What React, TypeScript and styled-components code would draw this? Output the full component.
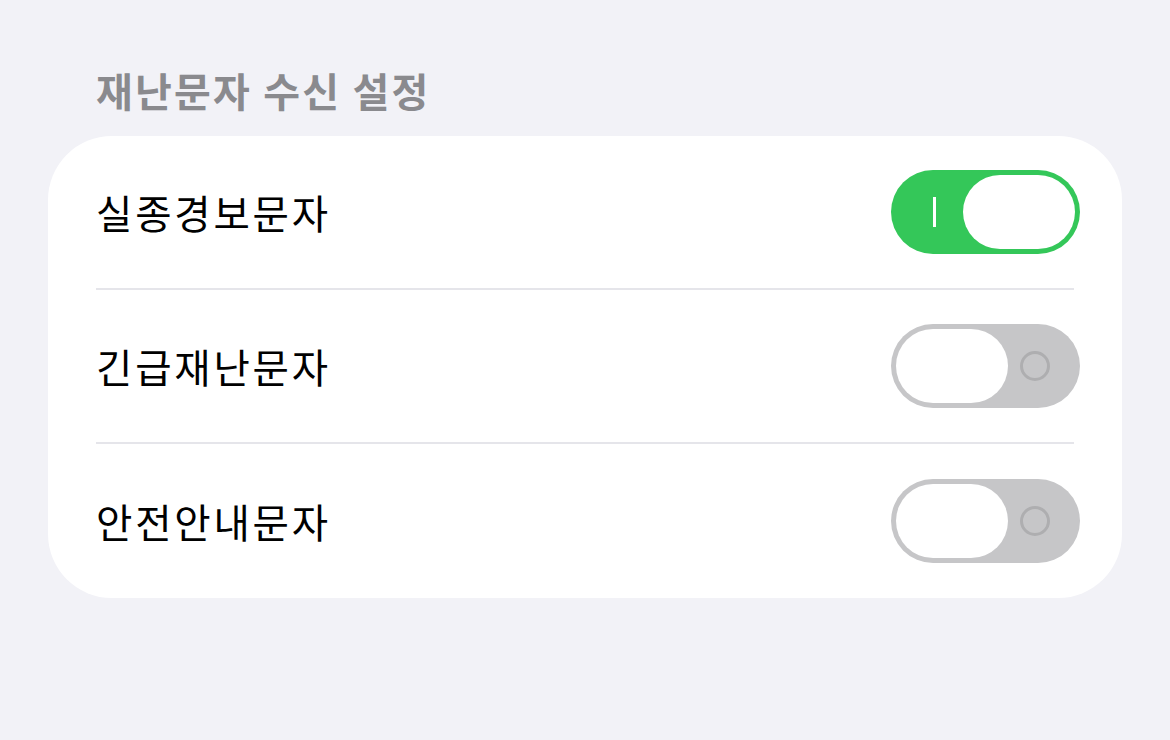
import React, { useState } from "react";
import styled, { createGlobalStyle } from "styled-components";

const Global = createGlobalStyle`
  html, body {
    margin: 0;
    padding: 0;
    background: #f2f2f7;
  }
  body {
    font-family: "Noto Sans CJK KR", "Noto Sans", sans-serif;
    -webkit-font-smoothing: antialiased;
  }
`;

const Page = styled.div`
  width: 1170px;
  height: 740px;
  box-sizing: border-box;
  padding: 67px 48px 0 48px;
  display: flex;
  flex-direction: column;
`;

const Title = styled.h2`
  margin: 0 0 22px 48px;
  font-size: 40px;
  line-height: 47px;
  font-weight: 600;
  letter-spacing: 2.2px;
  color: #8a8a8e;
`;

const Card = styled.div`
  background: #ffffff;
  border-radius: 64px;
  display: flex;
  flex-direction: column;
  overflow: hidden;
`;

const Row = styled.div<{ $last?: boolean }>`
  height: ${(p) => (p.$last ? 154 : 152)}px;
  padding: 0 42px 0 48px;
  display: flex;
  align-items: center;
  justify-content: space-between;
`;

const Label = styled.span`
  font-size: 39.5px;
  line-height: 46px;
  letter-spacing: 2.8px;
  color: #000;
  font-weight: 400;
`;

const Separator = styled.div`
  height: 2px;
  margin: 0 48px;
  background: #e5e5ea;
`;

const Track = styled.button<{ $on: boolean }>`
  position: relative;
  width: 189px;
  height: 84px;
  border: none;
  padding: 0;
  border-radius: 42px;
  background: ${(p) => (p.$on ? "#34c759" : "#c6c6c8")};
  cursor: pointer;
  flex-shrink: 0;
`;

const Knob = styled.span<{ $on: boolean }>`
  position: absolute;
  top: 5px;
  left: ${(p) => (p.$on ? 72 : 5)}px;
  width: 112px;
  height: 74px;
  border-radius: 37px;
  background: #ffffff;
`;

const OnMark = styled.span`
  position: absolute;
  left: 42px;
  top: 27px;
  width: 3px;
  height: 30px;
  background: #ffffff;
`;

const OffMark = styled.span`
  position: absolute;
  left: 129px;
  top: 27px;
  width: 24px;
  height: 24px;
  border-radius: 50%;
  border: 3px solid #aeaeb0;
`;

function Toggle({ on, onClick }: { on: boolean; onClick: () => void }) {
  return (
    <Track $on={on} onClick={onClick} aria-pressed={on}>
      {on ? <OnMark /> : <OffMark />}
      <Knob $on={on} />
    </Track>
  );
}

export default function App() {
  const [items, setItems] = useState([
    { label: "실종경보문자", on: true },
    { label: "긴급재난문자", on: false },
    { label: "안전안내문자", on: false },
  ]);
  const flip = (i: number) =>
    setItems((prev) => prev.map((it, j) => (j === i ? { ...it, on: !it.on } : it)));

  return (
    <>
      <Global />
      <Page>
        <Title>재난문자 수신 설정</Title>
        <Card>
          {items.map((it, i) => (
            <React.Fragment key={it.label}>
              <Row $last={i === items.length - 1}>
                <Label>{it.label}</Label>
                <Toggle on={it.on} onClick={() => flip(i)} />
              </Row>
              {i < items.length - 1 && <Separator />}
            </React.Fragment>
          ))}
        </Card>
      </Page>
    </>
  );
}
